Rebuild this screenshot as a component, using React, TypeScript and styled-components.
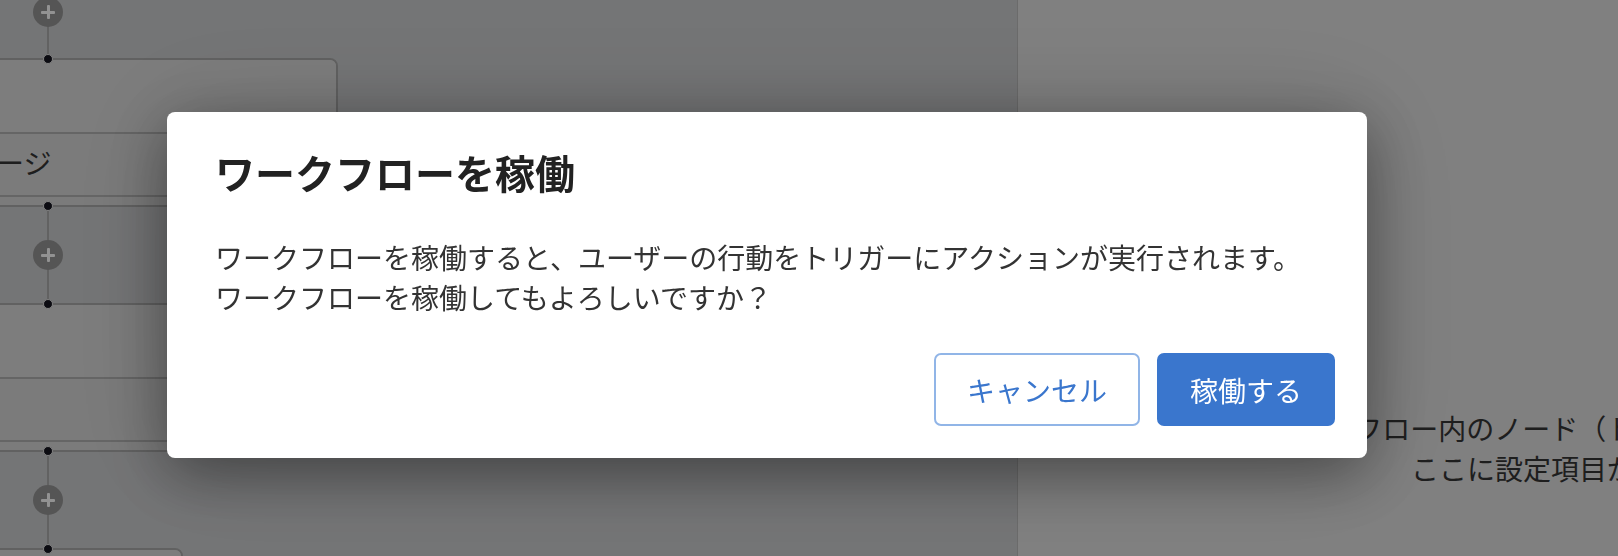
import React from "react";
import styled, { createGlobalStyle } from "styled-components";

const GlobalStyle = createGlobalStyle`
  html, body {
    margin: 0;
    padding: 0;
    width: 100%;
    height: 100%;
    overflow: hidden;
  }
  body {
    font-family: "Noto Sans CJK JP", "Noto Sans", sans-serif;
    color: #333;
  }
  * { box-sizing: border-box; }
`;

const Page = styled.div`
  display: flex;
  width: 100vw;
  height: 100vh;
  overflow: hidden;
`;

const Canvas = styled.div`
  flex: 0 0 1017px;
  height: 100%;
  overflow: hidden;
  background: #c2c3c5;
`;

const Flow = styled.div`
  display: flex;
  flex-direction: column;
  align-items: flex-start;
  margin-top: -34px;
`;

const SidePanel = styled.aside`
  flex: 0 0 1204px;
  height: 100%;
  background: #d5d5d5;
  border-left: 1px solid #b2b2b2;
  padding-top: 408px;
`;

const EmptyText = styled.p`
  margin: 0;
  text-align: center;
  font-size: 28px;
  line-height: 40px;
  color: #333;
  white-space: nowrap;
`;

/* ---------- diagram parts ---------- */

const Link = styled.div<{ $height: number }>`
  width: 96px;
  height: ${(p) => p.$height}px;
  display: flex;
  align-items: center;
  justify-content: center;
  background: linear-gradient(#a4a4a4, #a4a4a4) center / 2px 100% no-repeat;
`;

const AddButton = styled.div`
  position: relative;
  width: 30px;
  height: 30px;
  border-radius: 50%;
  background: #8e8e8e;
  &::before,
  &::after {
    content: "";
    position: absolute;
    background: #f4f4f4;
    border-radius: 1px;
  }
  &::before {
    left: 8px;
    top: 13.5px;
    width: 14px;
    height: 3px;
  }
  &::after {
    left: 13.5px;
    top: 8px;
    width: 3px;
    height: 14px;
  }
`;

const NodeCard = styled.div<{ $width: number; $height: number }>`
  position: relative;
  margin-left: -300px;
  width: ${(p) => p.$width}px;
  height: ${(p) => p.$height}px;
  flex-shrink: 0;
  display: flex;
  flex-direction: column;
  background: #cdcdcd;
  border: 2px solid #a2a2a2;
  border-radius: 8px;
`;

const Handle = styled.span<{ $side: "top" | "bottom" }>`
  position: absolute;
  left: 341px;
  ${(p) => (p.$side === "top" ? "top: -6px;" : "bottom: -6px;")}
  width: 10px;
  height: 10px;
  border-radius: 50%;
  background: #15151f;
  border: 1px solid #d8d8d8;
  z-index: 2;
`;

const NodeHeader = styled.div`
  flex: 0 0 74px;
  border-bottom: 2px solid #a9a9a9;
  background: #d0d0d0;
  border-radius: 6px 6px 0 0;
`;

const NodeBody = styled.div`
  flex: 1;
  display: flex;
  align-items: center;
  padding: 0 0 6px 210px;
  border-bottom: 2px solid #a9a9a9;
  font-size: 28px;
  line-height: 40px;
  color: #333;
  white-space: nowrap;
`;

const NodeFooter = styled.div`
  flex: 0 0 8px;
`;

/* ---------- modal ---------- */

const Backdrop = styled.div`
  position: fixed;
  inset: 0;
  background: rgba(0, 0, 0, 0.4);
  display: flex;
  align-items: flex-start;
  justify-content: flex-start;
  padding: 112px 0 0 167px;
  z-index: 10;
`;

const Dialog = styled.div`
  width: 1200px;
  background: #fff;
  border-radius: 8px;
  padding: 32px 32px 32px 48px;
  box-shadow: 0 16px 60px rgba(0, 0, 0, 0.38), 0 0 110px rgba(0, 0, 0, 0.14);
`;

const Title = styled.h2`
  margin: 0 0 37px;
  font-size: 40px;
  line-height: 56px;
  font-weight: 700;
  color: #222;
`;

const Message = styled.div`
  margin: 0 0 36px;
  font-size: 28px;
  color: #333;
`;

const MessageLine = styled.p`
  margin: 0;
  height: 40px;
  line-height: 40px;
  white-space: nowrap;
`;

const Actions = styled.div`
  display: flex;
  justify-content: flex-end;
  gap: 17px;
`;

const Button = styled.button<{ $primary?: boolean }>`
  height: 73px;
  padding: 0 31px;
  border-radius: 7px;
  font-family: "Noto Sans CJK JP", "Noto Sans", sans-serif;
  font-size: 28px;
  line-height: 40px;
  cursor: pointer;
  border: 2px solid ${(p) => (p.$primary ? "#3a76cd" : "#91b5e7")};
  background: ${(p) => (p.$primary ? "#3a76cd" : "#fff")};
  color: ${(p) => (p.$primary ? "#fff" : "#3a76cd")};
`;

export default function App() {
  return (
    <>
      <GlobalStyle />
      <Page>
        <Canvas>
          <Flow>
            <Link $height={92}>
              <AddButton />
            </Link>
            <NodeCard $width={638} $height={149}>
              <Handle $side="top" />
              <NodeHeader />
              <NodeBody>メッセージ</NodeBody>
              <NodeFooter />
              <Handle $side="bottom" />
            </NodeCard>
            <Link $height={96}>
              <AddButton />
            </Link>
            <NodeCard $width={660} $height={149}>
              <Handle $side="top" />
              <NodeHeader />
              <NodeBody />
              <NodeFooter />
              <Handle $side="bottom" />
            </NodeCard>
            <Link $height={96}>
              <AddButton />
            </Link>
            <NodeCard $width={483} $height={200}>
              <Handle $side="top" />
              <NodeHeader />
            </NodeCard>
          </Flow>
        </Canvas>
        <SidePanel>
          <EmptyText>
            ワークフロー内のノード（トリガーまたはアクション）
            <br />
            ここに設定項目が表示されます。
          </EmptyText>
        </SidePanel>
      </Page>

      <Backdrop>
        <Dialog role="dialog" aria-modal="true">
          <Title>ワークフローを稼働</Title>
          <Message>
            <MessageLine>
              ワークフローを稼働すると、ユーザーの行動をトリガーにアクションが実行されます。
            </MessageLine>
            <MessageLine>ワークフローを稼働してもよろしいですか？</MessageLine>
          </Message>
          <Actions>
            <Button>キャンセル</Button>
            <Button $primary>稼働する</Button>
          </Actions>
        </Dialog>
      </Backdrop>
    </>
  );
}
